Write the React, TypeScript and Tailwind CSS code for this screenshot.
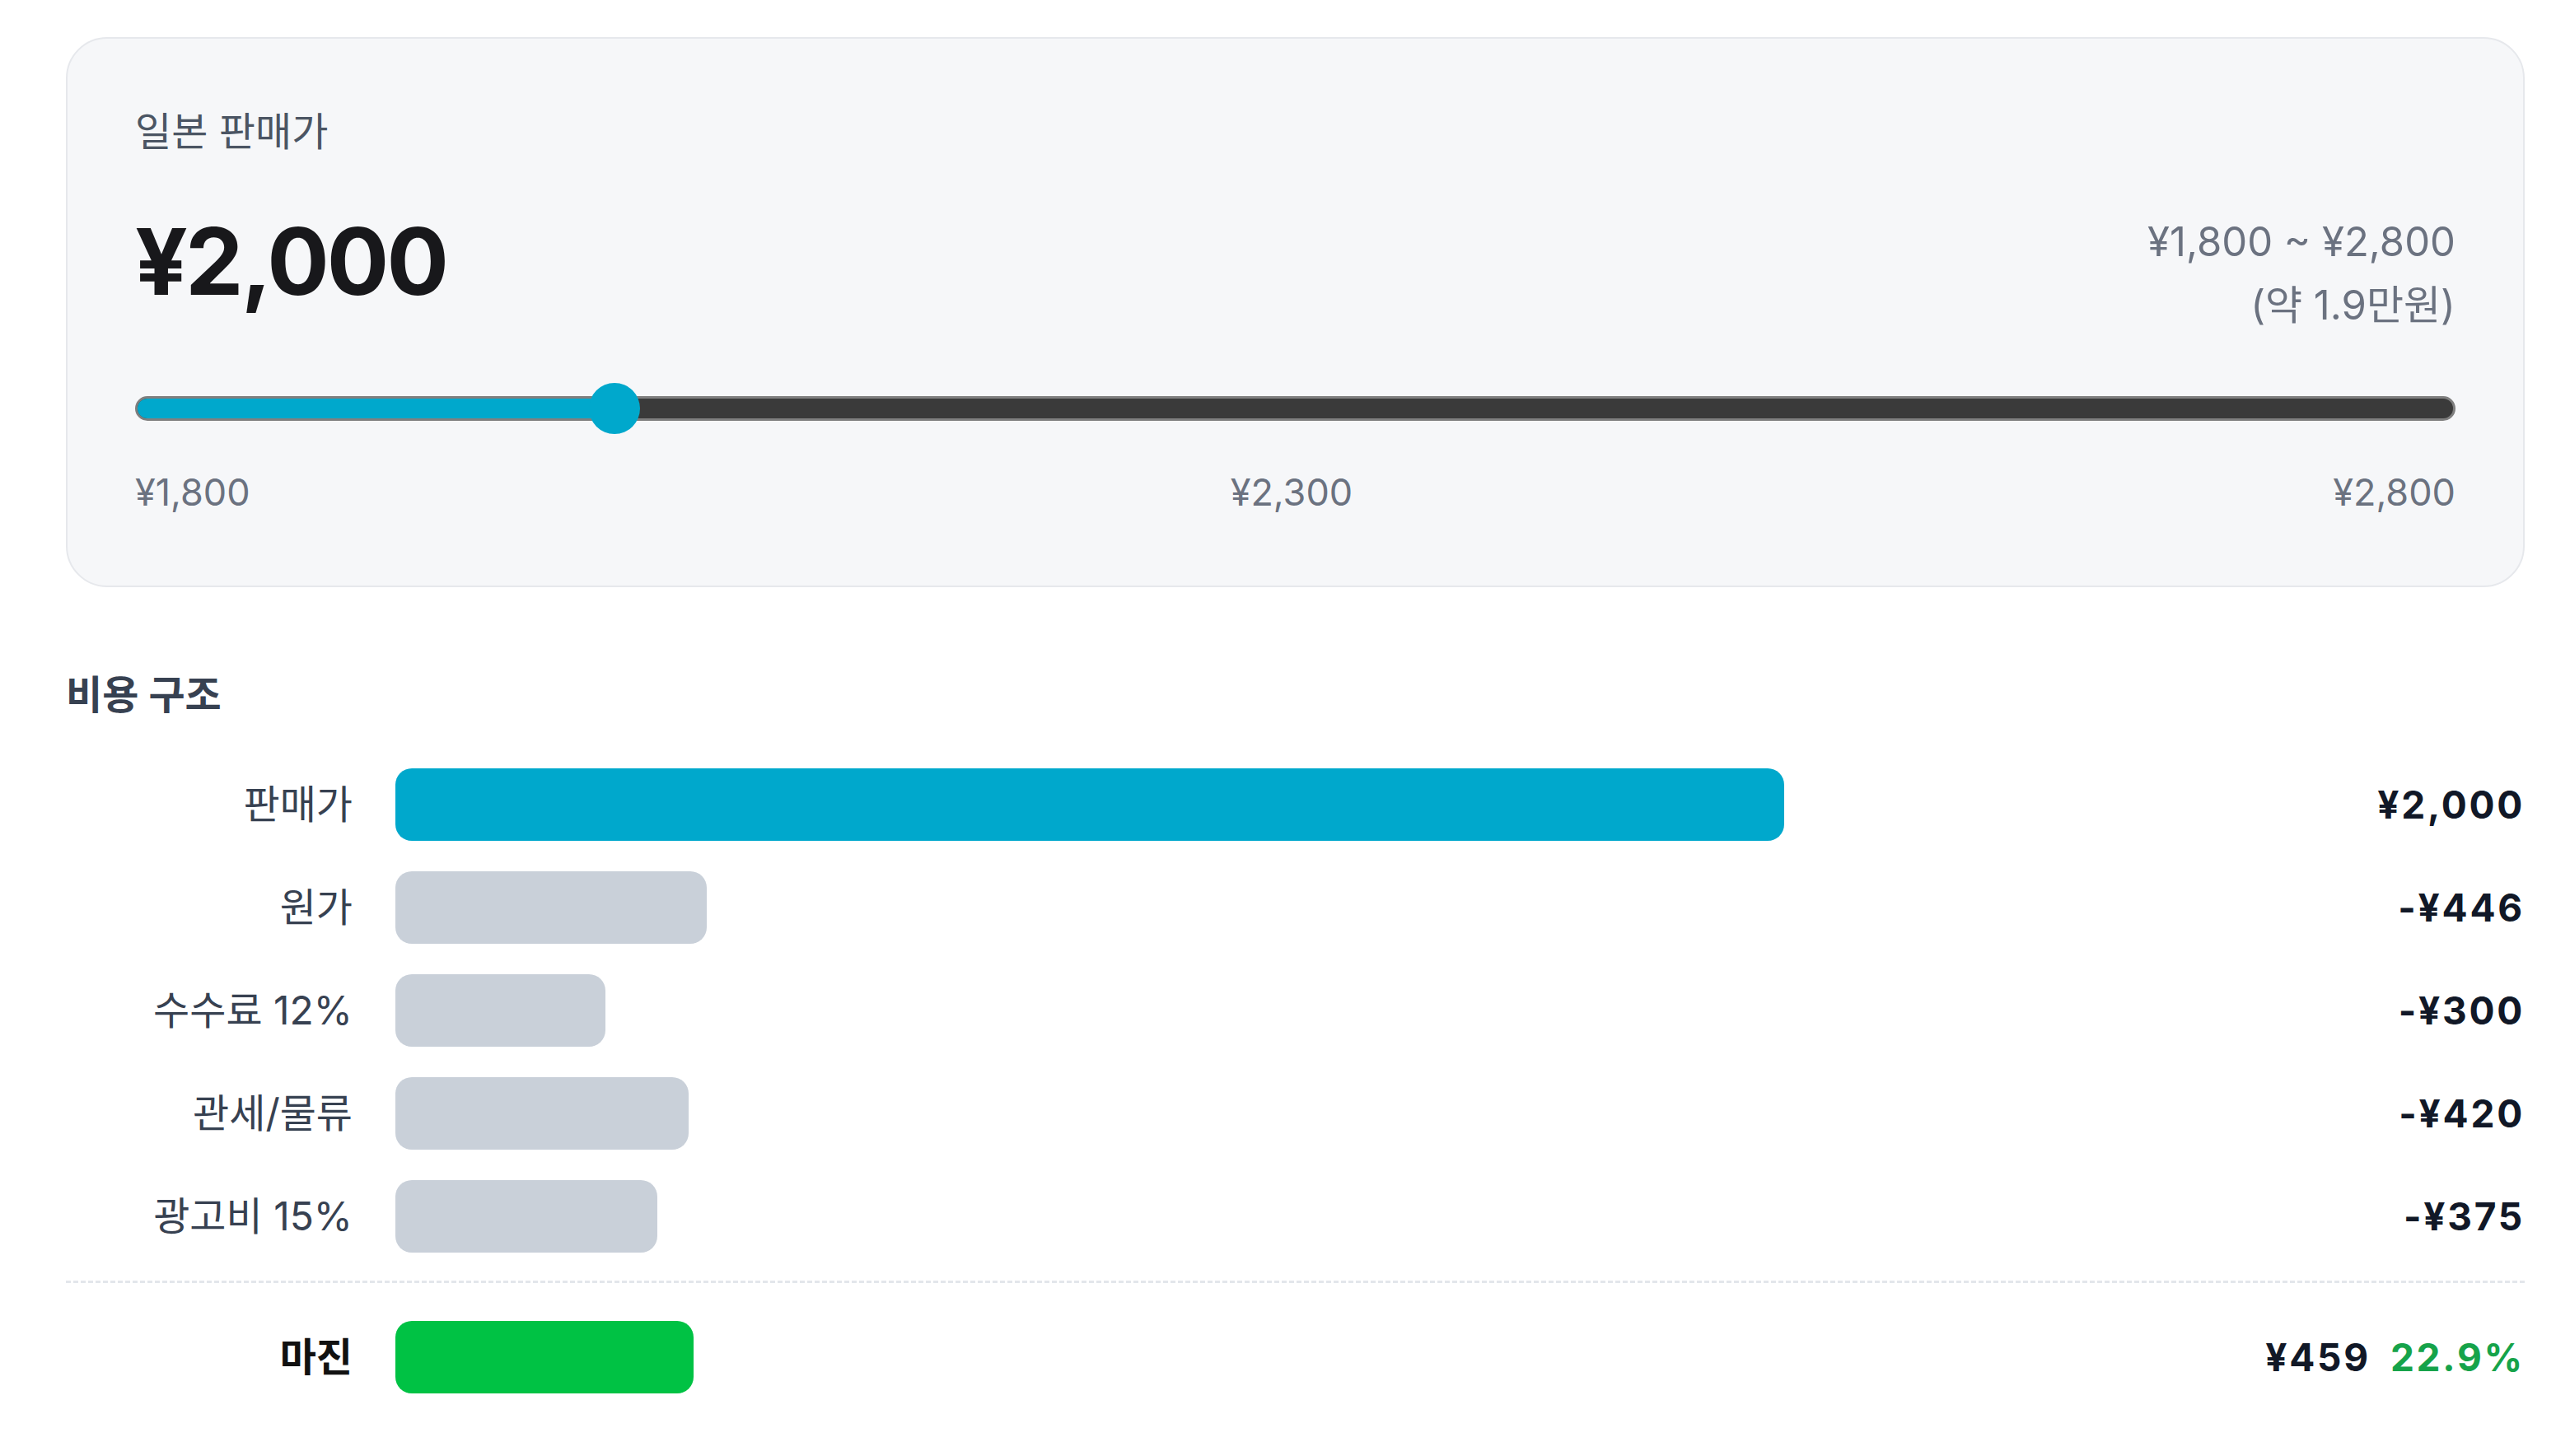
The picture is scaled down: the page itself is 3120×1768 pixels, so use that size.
import React from 'react'

const font = { fontFamily: "Inter, 'Noto Sans CJK KR', sans-serif" }

const costRows = [
  { label: '판매가', width: 1686, value: '¥2,000', color: 'bg-[#00a8cc]' },
  { label: '원가', width: 378, value: '-¥446', color: 'bg-[#c9d0d9]' },
  { label: '수수료 12%', width: 255, value: '-¥300', color: 'bg-[#c9d0d9]' },
  { label: '관세/물류', width: 356, value: '-¥420', color: 'bg-[#c9d0d9]' },
  { label: '광고비 15%', width: 318, value: '-¥375', color: 'bg-[#c9d0d9]' },
]

function PriceCard() {
  return (
    <div className="w-[2985px] rounded-[50px] border-2 border-[#e6e8ec] bg-[#f6f7f9] p-[82px]">
      {/* header */}
      <div className="flex items-start justify-between">
        <div className="flex flex-col">
          <div className="text-[48px] leading-[62px] text-[#4b5563]">일본 판매가</div>
          <div className="mt-[70px] text-[112px] font-bold leading-none tracking-tight text-[#18181b]">¥2,000</div>
        </div>
        <div className="mt-[126px] flex flex-col items-end text-[49px] leading-[77px] text-[#6b7280]">
          <span>¥1,800 ~ ¥2,800</span>
          <span>(약 1.9만원)</span>
        </div>
      </div>

      {/* slider */}
      <div className="relative mt-[56px] flex h-[62px] items-center">
        <div className="flex h-[30px] w-full overflow-hidden rounded-full border-[3px] border-[#7f7f7f] bg-[#3a3a3a]">
          <div className="h-full w-[580px] bg-[#00a8cc]" />
        </div>
        <div className="absolute left-[551px] top-0 h-[62px] w-[62px] rounded-full bg-[#00a8cc]" />
      </div>

      <div className="mt-[40px] flex justify-between text-[45px] leading-[62px] text-[#6b7280]">
        <span>¥1,800</span>
        <span>¥2,300</span>
        <span>¥2,800</span>
      </div>
    </div>
  )
}

function CostRow({ label, width, value, color }: { label: string; width: number; value: string; color: string }) {
  return (
    <div className="flex h-[88px] items-center">
      <div className="w-[348px] shrink-0 text-right text-[48px] text-[#374151]">{label}</div>
      <div className="ml-[52px] flex-1">
        <div className={`h-[88px] rounded-[20px] ${color}`} style={{ width }} />
      </div>
      <div className="shrink-0 text-right text-[46px] font-bold tracking-[0.06em] text-[#111827]">{value}</div>
    </div>
  )
}

export default function App() {
  return (
    <div className="min-h-[1768px] w-[3120px] bg-white pl-[80px] pt-[45px]" style={font}>
      <PriceCard />

      <div className="w-[2985px]">
        <div className="mt-[99px] text-[48px] font-semibold leading-[64px] text-[#374151]">비용 구조</div>

        <div className="mt-[57px] flex flex-col gap-[37px]">
          {costRows.map((r) => (
            <CostRow key={r.label} {...r} />
          ))}
        </div>

        <div className="mt-[34px] border-t-[3px] border-dashed border-[#e3e6eb]" />

        <div className="mt-[46px] flex h-[88px] items-center">
          <div className="w-[348px] shrink-0 text-right text-[48px] font-bold text-[#111]">마진</div>
          <div className="ml-[52px] flex-1">
            <div className="h-[88px] w-[362px] rounded-[20px] bg-[#00c244]" />
          </div>
          <div className="flex shrink-0 items-center gap-[24px] text-[46px] font-bold tracking-[0.06em]">
            <span className="text-[#111827]">¥459</span>
            <span className="text-[#16a34a]">22.9%</span>
          </div>
        </div>
      </div>
    </div>
  )
}
